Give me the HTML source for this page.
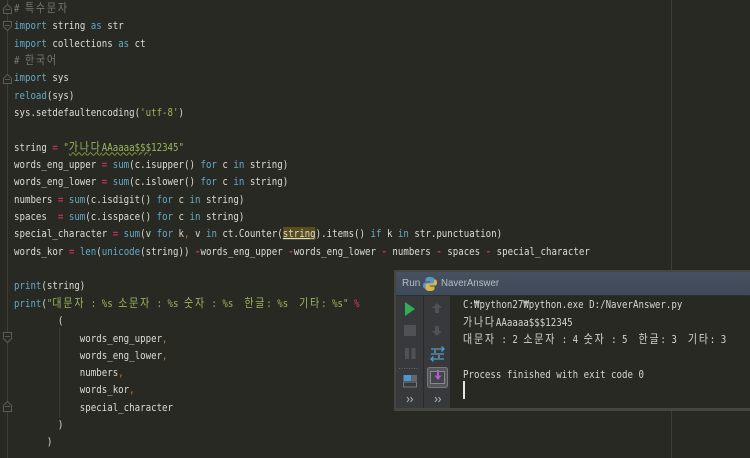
<!DOCTYPE html>
<html><head><meta charset="utf-8">
<style>
html,body{margin:0;padding:0;background:#282923;}
#root{position:relative;width:750px;height:458px;overflow:hidden;background:#282923;filter:blur(.35px);}
.l{position:absolute;left:14px;height:17px;line-height:17px;white-space:pre;font-family:"DejaVu Sans Mono","Noto Sans CJK KR",monospace;font-size:11px;letter-spacing:0;color:#dcdcd6;transform:scaleX(.828);transform-origin:0 0;}
.k{font-family:"Noto Sans CJK KR","NanumGothic",sans-serif;font-size:12px;letter-spacing:2.2px;line-height:1;}
.b{color:#62a9c8}.g{color:#9cb45e}.c{color:#77776e}.r{color:#b8325c;font-weight:bold}.o{color:#b5763a}.p{color:#e0386a}
.u{text-decoration:underline wavy #8a9a40 .6px;}
.h{background:#5a4e1c;text-decoration:underline;}
.box{position:absolute;}
</style></head><body>
<div id="root">
<svg class="box" style="left:0;top:0" width="750" height="458">
<line x1="7.5" y1="0" x2="7.5" y2="458" stroke="#3e3f3a" stroke-width="1"/>
<line x1="671.5" y1="0" x2="671.5" y2="458" stroke="#3e3f3a" stroke-width="1"/>
<line x1="59.5" y1="328" x2="59.5" y2="418" stroke="#3a3b36" stroke-width="1"/>
<g fill="#282923" stroke="#5a5b55" stroke-width="1">
<path d="M3.5 13.5V8.5L7.5 4.5L11.5 8.5V13.5Z"/>
<path d="M3.5 21.5V26.5L7.5 30.5L11.5 26.5V21.5Z"/>
<path d="M3.5 83.5V78.5L7.5 74.5L11.5 78.5V83.5Z"/>
<path d="M3.5 332.5V338.5L7.5 342.5L11.5 338.5V332.5Z"/>
<path d="M3.5 411.5V405.5L7.5 401.5L11.5 405.5V411.5Z"/>
</g>
<g stroke="#5a5b55" stroke-width="1">
<line x1="5" y1="9.5" x2="10" y2="9.5"/><line x1="5" y1="25.5" x2="10" y2="25.5"/><line x1="5" y1="79.5" x2="10" y2="79.5"/><line x1="5" y1="336.5" x2="10" y2="336.5"/><line x1="5" y1="406.5" x2="10" y2="406.5"/>
</g>
</svg>

<div class="l c" style="top:0px"># <span class="k">특수문자</span></div>
<div class="l" style="top:17px"><span class="b">import</span> string <span class="b">as</span> str</div>
<div class="l" style="top:34.5px"><span class="b">import</span> collections <span class="b">as</span> ct</div>
<div class="l c" style="top:52px"># <span class="k">한국어</span></div>
<div class="l" style="top:69px"><span class="b">import</span> sys</div>
<div class="l" style="top:86.5px"><span class="b">reload</span>(sys)</div>
<div class="l" style="top:104px">sys.setdefaultencoding(<span class="g">'utf-8'</span>)</div>
<div class="l" style="top:138.5px">string <span class="r">=</span> <span class="g">"<span class="u"><span class="k">가나다</span>AAaaaa$$$</span>12345"</span></div>
<div class="l" style="top:156px">words_eng_upper <span class="r">=</span> <span class="b">sum</span>(c.isupper() <span class="b">for</span> c <span class="b">in</span> string)</div>
<div class="l" style="top:173px">words_eng_lower <span class="r">=</span> <span class="b">sum</span>(c.islower() <span class="b">for</span> c <span class="b">in</span> string)</div>
<div class="l" style="top:190.5px">numbers <span class="r">=</span> <span class="b">sum</span>(c.isdigit() <span class="b">for</span> c <span class="b">in</span> string)</div>
<div class="l" style="top:208px">spaces  <span class="r">=</span> <span class="b">sum</span>(c.isspace() <span class="b">for</span> c <span class="b">in</span> string)</div>
<div class="l" style="top:225px">special_character <span class="r">=</span> <span class="b">sum</span>(v <span class="b">for</span> k<span class="o">,</span> v <span class="b">in</span> ct.Counter(<span class="h">string</span>).items() <span class="b">if</span> k <span class="b">in</span> str.punctuation)</div>
<div class="l" style="top:242.5px">words_kor <span class="r">=</span> <span class="b">len</span>(<span class="b">unicode</span>(string)) <span class="r">-</span>words_eng_upper <span class="r">-</span>words_eng_lower <span class="r">-</span> numbers <span class="r">-</span> spaces <span class="r">-</span> special_character</div>
<div class="l" style="top:277px"><span class="b">print</span>(string)</div>
<div class="l" style="top:294.5px"><span class="b">print</span>(<span class="g">"<span class="k">대문자</span> : %s <span class="k">소문자</span> : %s <span class="k">숫자</span> : %s  <span class="k">한글</span>: %s  <span class="k">기타</span>: %s"</span> <span class="p">%</span></div>
<div class="l" style="top:312px">        (</div>
<div class="l" style="top:329.5px">            words_eng_upper<span class="o">,</span></div>
<div class="l" style="top:346.5px">            words_eng_lower<span class="o">,</span></div>
<div class="l" style="top:363.5px">            numbers<span class="o">,</span></div>
<div class="l" style="top:381px">            words_kor<span class="o">,</span></div>
<div class="l" style="top:398.5px">            special_character</div>
<div class="l" style="top:415.5px">        )</div>
<div class="l" style="top:433px">      )</div>

<!-- Run panel -->
<div class="box" style="left:394px;top:270px;width:356px;height:141px;background:#45463f;"></div>
<div class="box" style="left:396px;top:272px;width:354px;height:23px;background:linear-gradient(#46505f,#3f4a5a);border-bottom:1px solid #2c2f30;"></div>
<div class="box" style="left:396px;top:296px;width:354px;height:112px;background:#38393b;"></div>
<div class="box" style="left:423px;top:296px;width:1px;height:112px;background:#2a2b2a;"></div>
<div class="box" style="left:450px;top:296px;width:300px;height:112px;background:#282923;"></div>
<div class="box" style="left:402px;top:276px;font:10px/16px 'Liberation Sans',sans-serif;color:#b9bdc2;">Run</div>
<div class="box" style="left:441px;top:276px;font:9.7px/16px 'Liberation Sans',sans-serif;color:#b9bdc2;">NaverAnswer</div>
<svg class="box" style="left:394px;top:270px" width="60" height="141">
<!-- python logo -->
<path d="M36 7Q31.500 7 31.500 9.500V11.500H36.200V12.500H31Q29 12.500 29 15.500Q29 18.500 31 18.500H32V16.500Q32 14.500 34 14.500H38Q40.500 14.500 40.500 12.500V9.500Q40.500 7 36 7Z" fill="#5a95c4"/>
<path d="M36 21Q40.500 21 40.500 18.500V16.500H35.800V15.500H41Q43 15.500 43 12.500Q43 9.500 41 9.500H40V11.500Q40 13.500 38 13.500H34Q31.500 13.500 31.500 15.500V18.500Q31.500 21 36 21Z" fill="#d8b64a"/>
<!-- run -->
<path d="M11 32L21 39L11 46Z" fill="#2fae57"/>
<!-- stop -->
<rect x="10" y="55" width="12" height="11" fill="#505154"/>
<!-- pause -->
<rect x="11" y="78" width="4" height="11" fill="#505154"/><rect x="17.500" y="78" width="4" height="11" fill="#505154"/>
<!-- separator -->
<line x1="5" y1="98.500" x2="24" y2="98.500" stroke="#66676a" stroke-width="1" stroke-dasharray="1 1.500"/>
<!-- layout icon -->
<rect x="9.500" y="105" width="8" height="6" fill="#4e96c8"/><rect x="18" y="105" width="5" height="6" fill="#66676a"/>
<rect x="9.500" y="112" width="13" height="5" fill="none" stroke="#77787a"/>
<!-- chevrons -->
<path d="M13 127l2 2.500l-2 2.500M16.500 127l2 2.500l-2 2.500" fill="none" stroke="#b0b2b5" stroke-width="1"/>
<path d="M41 127l2 2.500l-2 2.500M44.500 127l2 2.500l-2 2.500" fill="none" stroke="#b0b2b5" stroke-width="1"/>
<!-- up / down arrows -->
<path d="M43 33L38 38H41V43H45V38H48Z" fill="#505154"/>
<path d="M43 66L38 61H41V56H45V61H48Z" fill="#505154"/>
<!-- wrap icon -->
<g fill="none" stroke="#4e9ccc" stroke-width="1.300">
<path d="M37 79H50"/><path d="M37 84H50"/><path d="M37 89H50"/>
<path d="M47.500 76.500l2.500 2.500l-2.500 2.500M39.500 86.500l-2.500 2.500l2.500 2.500"/>
</g>
<path d="M41 80v3M45 85v3" stroke="#9a9ba0" stroke-width="1.300"/>
<!-- scroll to end button -->
<rect x="33.500" y="97.500" width="20" height="20" rx="2" fill="#55565a" stroke="#77787a"/>
<rect x="36.500" y="101.500" width="14" height="12" fill="#44454a" stroke="#88898c"/>
<path d="M44 100v7" stroke="#b060c8" stroke-width="2"/>
<path d="M40.500 105.500L44 110L47.500 105.500Z" fill="#b060c8"/>
</svg>

<div class="l" style="left:463px;top:296px;color:#d4d4d0">C:₩python27₩python.exe D:/NaverAnswer.py</div>
<div class="l" style="left:463px;top:313.5px;color:#d4d4d0"><span class="k">가나다</span>AAaaaa$$$12345</div>
<div class="l" style="left:463px;top:331px;color:#d4d4d0"><span class="k">대문자</span> : 2 <span class="k">소문자</span> : 4 <span class="k">숫자</span> : 5  <span class="k">한글</span>: 3  <span class="k">기타</span>: 3</div>
<div class="l" style="left:463px;top:365.5px;color:#d4d4d0">Process finished with exit code 0</div>
<div class="box" style="left:463px;top:381px;width:2px;height:18px;background:#e4e4e0;"></div>
</div>
</body></html>
